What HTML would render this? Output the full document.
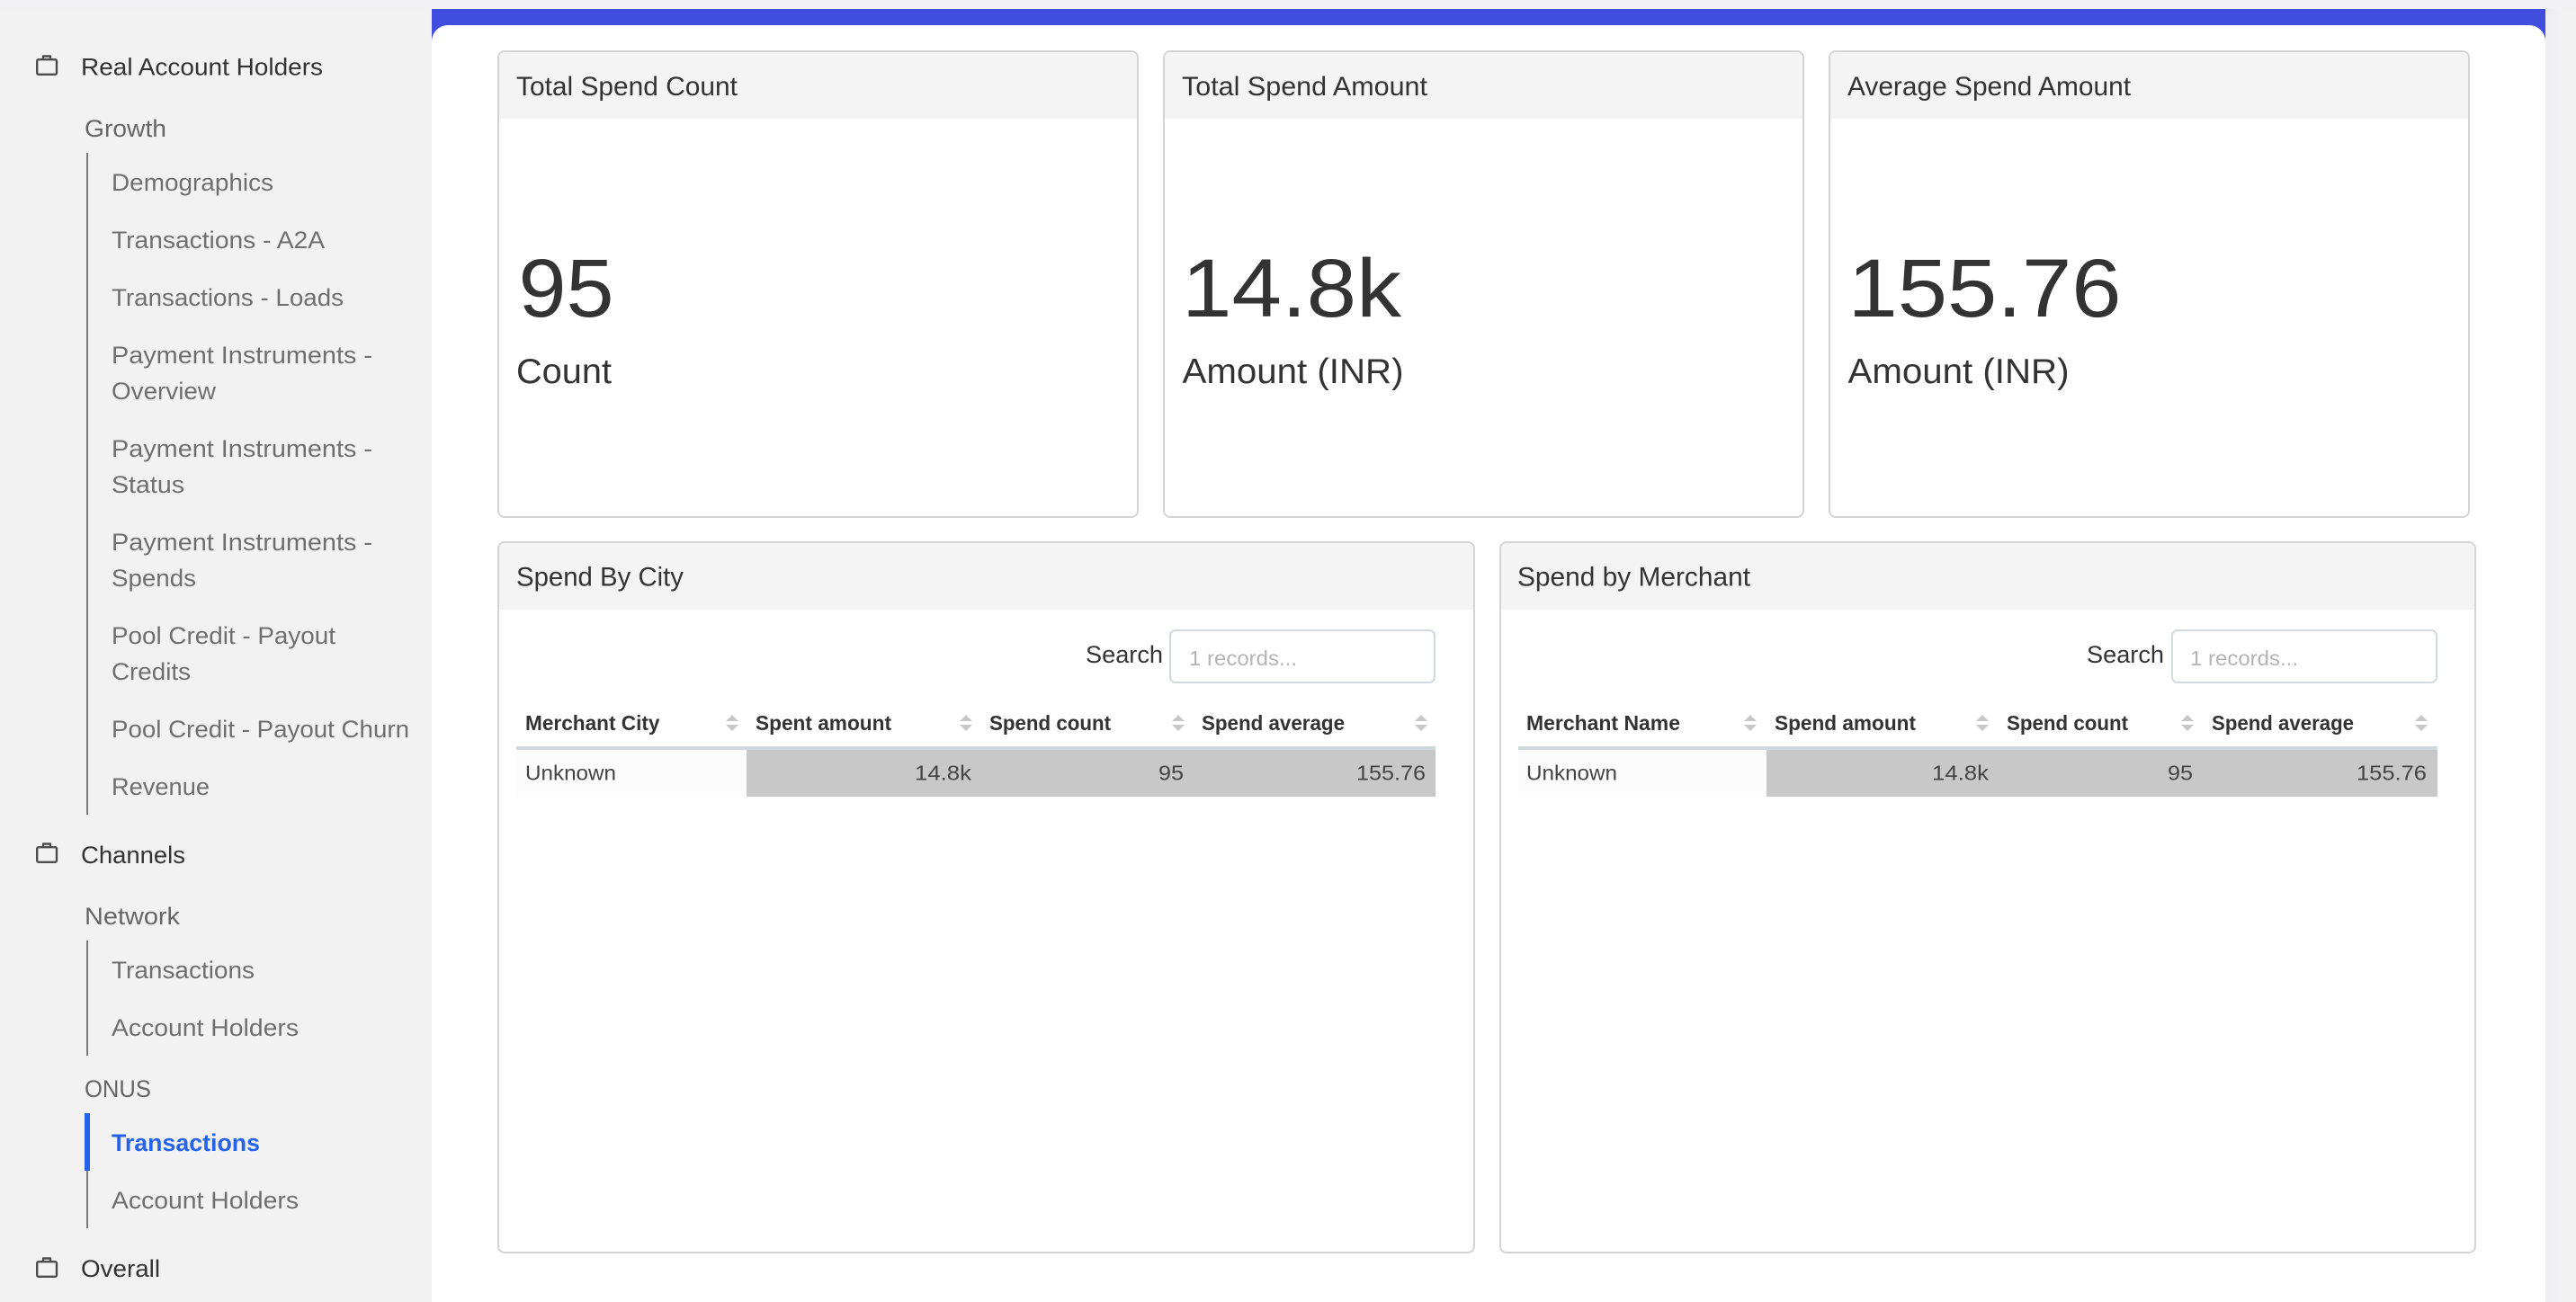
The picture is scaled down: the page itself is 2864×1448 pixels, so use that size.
<!DOCTYPE html>
<html lang="en">
<head>
<meta charset="utf-8">
<title>Spend Dashboard</title>
<style>
html,body{margin:0;padding:0;width:2864px;height:1448px;overflow:hidden;background:#f2f2f3}
svg{display:block}
text{font-family:"Liberation Sans",sans-serif;white-space:pre}
.top{font-size:27px;fill:#333}
.grp{font-size:27px;fill:#666}
.it{font-size:27px;fill:#6f6f6f}
.act{font-size:27px;fill:#2563eb;font-weight:700}
.ttl{font-size:29.5px;fill:#333}
.big{font-size:92px;fill:#333}
.lbl{font-size:39px;fill:#333}
.sr{font-size:27px;fill:#333}
.ph{font-size:23px;fill:#b4b4b4}
.th{font-size:23.5px;fill:#333;font-weight:700}
.td{font-size:23px;fill:#444}
.card{fill:#fff;stroke:#d4d4d4;stroke-width:2}
.hd{fill:#f4f4f4}
.ln{fill:#7a7a7a}
.ic{fill:none;stroke:#4d4d4d;stroke-width:2.4;stroke-linejoin:round}
.ar{fill:#c8c8c8}
.inp{fill:#fff;stroke:#d3d9df;stroke-width:2}
</style>
</head>
<body>
<svg xmlns="http://www.w3.org/2000/svg" width="2864" height="1448" viewBox="0 0 2864 1448">
<defs>
<linearGradient id="sh" x1="0" x2="1" y1="0" y2="0"><stop offset="0" stop-color="#ededef"/><stop offset="1" stop-color="#f2f2f3"/></linearGradient>
<g id="bag"><rect x="41.2" y="5.2" width="21.8" height="16.6" rx="1.8" class="ic"/><path d="M48 5.2V1.5h8v3.7" class="ic"/></g>
</defs>

<rect width="2864" height="1448" fill="#f2f2f3"/>
<rect width="2864" height="10" fill="#f1f1f4"/>
<rect x="2830" y="10" width="22" height="1438" fill="url(#sh)"/>

<!-- main frame -->
<rect x="480" y="10" width="2350" height="50" fill="#414ddf"/>
<path d="M480 46a18 18 0 0 1 18-18H2812a18 18 0 0 1 18 18V1448H480Z" fill="#fff"/>

<!-- sidebar -->
<use href="#bag" x="0" y="61"/>
<text class="top" x="90" y="83.5" textLength="269" lengthAdjust="spacingAndGlyphs">Real Account Holders</text>
<text class="grp" x="94" y="152" textLength="91" lengthAdjust="spacingAndGlyphs">Growth</text>
<rect class="ln" x="96" y="170" width="2" height="736"/>
<text class="it" x="124" y="212" textLength="180" lengthAdjust="spacingAndGlyphs">Demographics</text>
<text class="it" x="124" y="276" textLength="237" lengthAdjust="spacingAndGlyphs">Transactions - A2A</text>
<text class="it" x="124" y="340" textLength="258" lengthAdjust="spacingAndGlyphs">Transactions - Loads</text>
<text class="it" x="124" y="404" textLength="290" lengthAdjust="spacingAndGlyphs">Payment Instruments -</text>
<text class="it" x="124" y="444" textLength="116" lengthAdjust="spacingAndGlyphs">Overview</text>
<text class="it" x="124" y="508" textLength="290" lengthAdjust="spacingAndGlyphs">Payment Instruments -</text>
<text class="it" x="124" y="548" textLength="81" lengthAdjust="spacingAndGlyphs">Status</text>
<text class="it" x="124" y="612" textLength="290" lengthAdjust="spacingAndGlyphs">Payment Instruments -</text>
<text class="it" x="124" y="652" textLength="94" lengthAdjust="spacingAndGlyphs">Spends</text>
<text class="it" x="124" y="716" textLength="249" lengthAdjust="spacingAndGlyphs">Pool Credit - Payout</text>
<text class="it" x="124" y="756" textLength="88" lengthAdjust="spacingAndGlyphs">Credits</text>
<text class="it" x="124" y="820" textLength="331" lengthAdjust="spacingAndGlyphs">Pool Credit - Payout Churn</text>
<text class="it" x="124" y="884" textLength="109" lengthAdjust="spacingAndGlyphs">Revenue</text>

<use href="#bag" x="0" y="937"/>
<text class="top" x="90" y="960" textLength="116" lengthAdjust="spacingAndGlyphs">Channels</text>
<text class="grp" x="94" y="1028" textLength="106" lengthAdjust="spacingAndGlyphs">Network</text>
<rect class="ln" x="96" y="1046" width="2" height="128"/>
<text class="it" x="124" y="1088" textLength="159" lengthAdjust="spacingAndGlyphs">Transactions</text>
<text class="it" x="124" y="1152" textLength="208" lengthAdjust="spacingAndGlyphs">Account Holders</text>
<text class="grp" x="94" y="1220" textLength="74" lengthAdjust="spacingAndGlyphs">ONUS</text>
<rect class="ln" x="96" y="1238" width="2" height="128"/>
<rect x="94" y="1238" width="6" height="64" fill="#2563eb"/>
<text class="act" x="124" y="1280" textLength="165" lengthAdjust="spacingAndGlyphs">Transactions</text>
<text class="it" x="124" y="1344" textLength="208" lengthAdjust="spacingAndGlyphs">Account Holders</text>
<use href="#bag" x="0" y="1398"/>
<text class="top" x="90" y="1420" textLength="88" lengthAdjust="spacingAndGlyphs">Overall</text>

<!-- stat card 1 -->
<rect class="card" x="554" y="57" width="711" height="518" rx="7"/>
<path class="hd" d="M555 132V64a6 6 0 0 1 6-6H1258a6 6 0 0 1 6 6v68Z"/>
<text class="ttl" x="574" y="106" textLength="246" lengthAdjust="spacingAndGlyphs">Total Spend Count</text>
<text class="big" x="576.5" y="352" textLength="106" lengthAdjust="spacingAndGlyphs">95</text>
<text class="lbl" x="574" y="426" textLength="106" lengthAdjust="spacingAndGlyphs">Count</text>

<!-- stat card 2 -->
<rect class="card" x="1294" y="57" width="711" height="518" rx="7"/>
<path class="hd" d="M1295 132V64a6 6 0 0 1 6-6H1998a6 6 0 0 1 6 6v68Z"/>
<text class="ttl" x="1314" y="106" textLength="273" lengthAdjust="spacingAndGlyphs">Total Spend Amount</text>
<text class="big" x="1314" y="352" textLength="244" lengthAdjust="spacingAndGlyphs">14.8k</text>
<text class="lbl" x="1314.5" y="426" textLength="246" lengthAdjust="spacingAndGlyphs">Amount (INR)</text>

<!-- stat card 3 -->
<rect class="card" x="2034" y="57" width="711" height="518" rx="7"/>
<path class="hd" d="M2035 132V64a6 6 0 0 1 6-6H2738a6 6 0 0 1 6 6v68Z"/>
<text class="ttl" x="2054" y="106" textLength="315" lengthAdjust="spacingAndGlyphs">Average Spend Amount</text>
<text class="big" x="2054.5" y="352" textLength="304" lengthAdjust="spacingAndGlyphs">155.76</text>
<text class="lbl" x="2054.5" y="426" textLength="246" lengthAdjust="spacingAndGlyphs">Amount (INR)</text>

<!-- Spend By City -->
<rect class="card" x="554" y="603" width="1085" height="790" rx="7"/>
<path class="hd" d="M555 678V610a6 6 0 0 1 6-6H1632a6 6 0 0 1 6 6v68Z"/>
<text class="ttl" x="574" y="651.5" textLength="186" lengthAdjust="spacingAndGlyphs">Spend By City</text>
<text class="sr" x="1207" y="737" textLength="86" lengthAdjust="spacingAndGlyphs">Search</text>
<rect class="inp" x="1301" y="701" width="294" height="58" rx="6"/>
<text class="ph" x="1322" y="740" textLength="120" lengthAdjust="spacingAndGlyphs">1 records...</text>

<text class="th" x="584" y="812" textLength="149.5" lengthAdjust="spacingAndGlyphs">Merchant City</text>
<text class="th" x="840" y="812" textLength="151" lengthAdjust="spacingAndGlyphs">Spent amount</text>
<text class="th" x="1100" y="812" textLength="135" lengthAdjust="spacingAndGlyphs">Spend count</text>
<text class="th" x="1336" y="812" textLength="159" lengthAdjust="spacingAndGlyphs">Spend average</text>
<path class="ar" d="M807 802l7-7 7 7ZM807 806l7 7 7-7Z"/>
<path class="ar" d="M1067 802l7-7 7 7ZM1067 806l7 7 7-7Z"/>
<path class="ar" d="M1303 802l7-7 7 7ZM1303 806l7 7 7-7Z"/>
<path class="ar" d="M1573 802l7-7 7 7ZM1573 806l7 7 7-7Z"/>
<rect x="574" y="830" width="1022" height="4" fill="#cfd8dc"/>
<rect x="574" y="834" width="256" height="52" fill="#fcfcfc"/>
<rect x="830" y="834" width="766" height="52" fill="#c8c8c8"/>
<text class="td" x="584" y="867.5" textLength="101" lengthAdjust="spacingAndGlyphs">Unknown</text>
<text class="td" x="1017" y="867.5" textLength="63" lengthAdjust="spacingAndGlyphs">14.8k</text>
<text class="td" x="1288" y="867.5" textLength="28" lengthAdjust="spacingAndGlyphs">95</text>
<text class="td" x="1508" y="867.5" textLength="77" lengthAdjust="spacingAndGlyphs">155.76</text>

<!-- Spend by Merchant -->
<rect class="card" x="1668" y="603" width="1084" height="790" rx="7"/>
<path class="hd" d="M1669 678V610a6 6 0 0 1 6-6H2745a6 6 0 0 1 6 6v68Z"/>
<text class="ttl" x="1687" y="651.5" textLength="259" lengthAdjust="spacingAndGlyphs">Spend by Merchant</text>
<text class="sr" x="2320" y="737" textLength="86" lengthAdjust="spacingAndGlyphs">Search</text>
<rect class="inp" x="2415" y="701" width="294" height="58" rx="6"/>
<text class="ph" x="2435" y="740" textLength="120" lengthAdjust="spacingAndGlyphs">1 records...</text>

<text class="th" x="1697" y="812" textLength="171" lengthAdjust="spacingAndGlyphs">Merchant Name</text>
<text class="th" x="1973" y="812" textLength="157" lengthAdjust="spacingAndGlyphs">Spend amount</text>
<text class="th" x="2231" y="812" textLength="135" lengthAdjust="spacingAndGlyphs">Spend count</text>
<text class="th" x="2459" y="812" textLength="158" lengthAdjust="spacingAndGlyphs">Spend average</text>
<path class="ar" d="M1939 802l7-7 7 7ZM1939 806l7 7 7-7Z"/>
<path class="ar" d="M2197 802l7-7 7 7ZM2197 806l7 7 7-7Z"/>
<path class="ar" d="M2425 802l7-7 7 7ZM2425 806l7 7 7-7Z"/>
<path class="ar" d="M2685 802l7-7 7 7ZM2685 806l7 7 7-7Z"/>
<rect x="1688" y="830" width="1022" height="4" fill="#cfd8dc"/>
<rect x="1688" y="834" width="276" height="52" fill="#fcfcfc"/>
<rect x="1964" y="834" width="746" height="52" fill="#c8c8c8"/>
<text class="td" x="1697" y="867.5" textLength="101" lengthAdjust="spacingAndGlyphs">Unknown</text>
<text class="td" x="2148" y="867.5" textLength="63" lengthAdjust="spacingAndGlyphs">14.8k</text>
<text class="td" x="2410" y="867.5" textLength="28" lengthAdjust="spacingAndGlyphs">95</text>
<text class="td" x="2620" y="867.5" textLength="78" lengthAdjust="spacingAndGlyphs">155.76</text>
</svg>
</body>
</html>
